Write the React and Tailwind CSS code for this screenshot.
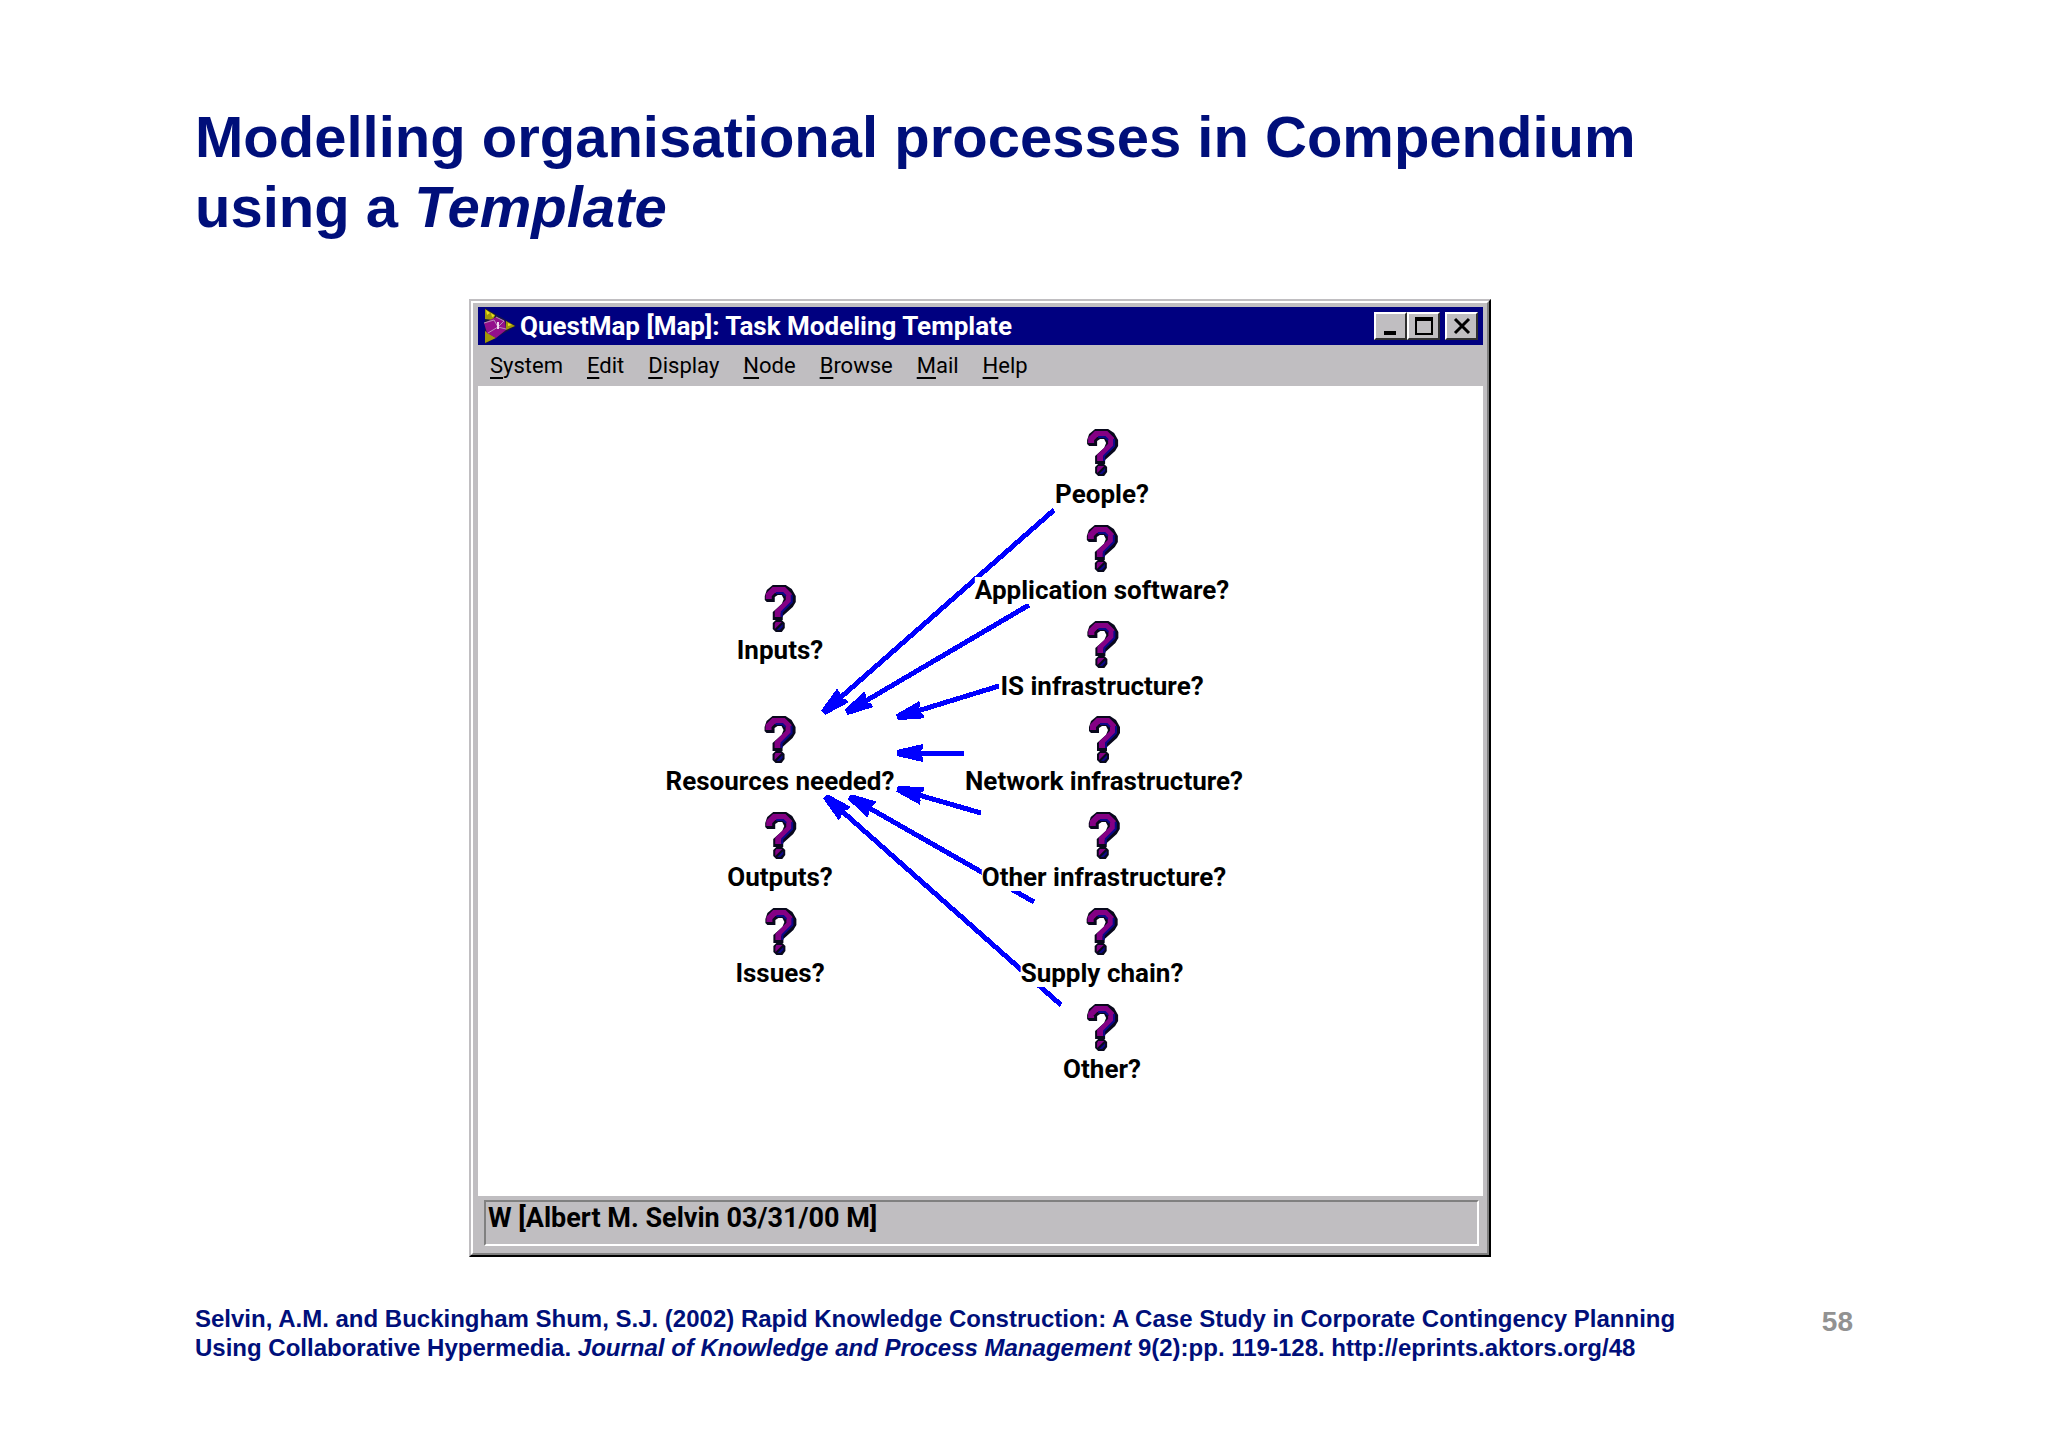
const MENUS = ['System', 'Edit', 'Display', 'Node', 'Browse', 'Mail', 'Help']

// x is the centre of a node, y the top of its icon, both in canvas pixels
const NODES = [
  { label: 'Inputs?', x: 302, y: 198 },
  { label: 'Resources needed?', x: 302, y: 329 },
  { label: 'Outputs?', x: 302, y: 425 },
  { label: 'Issues?', x: 302, y: 521 },
  { label: 'People?', x: 624, y: 42 },
  { label: 'Application software?', x: 624, y: 138 },
  { label: 'IS infrastructure?', x: 624, y: 234 },
  { label: 'Network infrastructure?', x: 626, y: 329 },
  { label: 'Other infrastructure?', x: 626, y: 425 },
  { label: 'Supply chain?', x: 624, y: 521 },
  { label: 'Other?', x: 624, y: 617 },
]

const LINKS = [
  { from: [576, 124], to: [346, 326] },
  { from: [551, 219], to: [369, 326] },
  { from: [521, 300], to: [420, 331] },
  { from: [486, 367], to: [420, 367] },
  { from: [503, 427], to: [420, 403] },
  { from: [556, 516], to: [372, 411] },
  { from: [583, 619], to: [348, 411] },
]

function QuestionIcon() {
  return (
    <svg width="34" height="48" viewBox="0 0 34 48" aria-hidden="true">
      <g fill="#08081c">
        <path d="M2 12L4 6L10 1H23L29 5L33 12V18L30 23L20 32V36H10V28L19 20L21 15L19 11H15L12 13V18H4L2 16Z" />
        <path d="M13 36H19L22 39V44L19 48H13L10 45V39Z" />
      </g>
      <path d="M6 15V11L11 6H21L26 11V17L15 28V33" fill="none" stroke="#840084" strokeWidth="6" />
      <path d="M13 9H20L23 12M29 11V18L19 28V33" fill="none" stroke="#0c0888" strokeWidth="2" />
      <path d="M13 38H19L12 45V40Z" fill="#840084" />
      <path d="M20 40V43L17 46H14Z" fill="#0c0888" />
    </svg>
  )
}

function Link({ from, to }) {
  const angle = (Math.atan2(from[1] - to[1], from[0] - to[0]) * 180) / Math.PI
  return (
    <g>
      <line x1={from[0]} y1={from[1]} x2={to[0]} y2={to[1]} stroke="#0000ff" strokeWidth="5" />
      <path d="M-1 -3L25 -9V-5L21 0L25 5V9L-1 3Z" fill="#0000ff" transform={`translate(${to[0]} ${to[1]}) rotate(${angle})`} />
    </g>
  )
}

function MapNode({ label, x, y }) {
  return (
    <div className="absolute flex -translate-x-1/2 flex-col items-center gap-[5px]" style={{ left: x, top: y }}>
      <QuestionIcon />
      <span className="bg-white text-[26px] leading-[27px] font-bold whitespace-nowrap">{label}</span>
    </div>
  )
}

function CaptionButton({ label, children }) {
  return (
    <button
      aria-label={label}
      className="flex h-7 w-[33px] items-center justify-center border-2 border-t-white border-r-[#303030] border-b-[#303030] border-l-white bg-[#c0bec1]"
    >
      {children}
    </button>
  )
}

function TitleBar() {
  return (
    <div className="flex h-[38px] items-center bg-[#000080] pr-[5px] pl-1">
      <svg width="34" height="36" viewBox="0 0 34 36" aria-hidden="true">
        <path d="M3 0L34 18L3 36Z" fill="#181840" />
        <path d="M3 1L13 7L11 12L3 11ZM24 13L33 18L24 22ZM3 23L14 30L3 35Z" fill="#a09808" />
        <path d="M4 2L8 5L5 7ZM9 5L13 8L10 9ZM26 15L30 17L26 18Z" fill="#e8e020" />
        <path d="M2 15L14 9L23 13L24 22L14 30L5 25Z" fill="#94108c" />
        <path d="M2 15L12 12L16 19L24 21M16 19L6 25M14 9L22 13L16 19" fill="none" stroke="#b890b8" strokeWidth="1" />
        <path d="M15 14H17V21H15Z" fill="#f0d8f0" />
      </svg>
      <h2 className="ml-1 flex-1 text-[26px] leading-[30px] font-bold whitespace-nowrap text-white">
        QuestMap [Map]: Task Modeling Template
      </h2>
      <div className="flex">
        <CaptionButton label="Minimize">
          <svg width="20" height="20" viewBox="0 0 20 20">
            <path d="M3 17H15" stroke="#000" strokeWidth="4" />
          </svg>
        </CaptionButton>
        <CaptionButton label="Maximize">
          <svg width="20" height="20" viewBox="0 0 20 20">
            <path d="M2 2H18V18H2Z" fill="none" stroke="#000" strokeWidth="2" />
            <path d="M1 3H19" stroke="#000" strokeWidth="4" />
          </svg>
        </CaptionButton>
      </div>
      <div className="ml-[5px]">
        <CaptionButton label="Close">
          <svg width="20" height="20" viewBox="0 0 20 20">
            <path d="M3 3L17 17M17 3L3 17" stroke="#000" strokeWidth="3" />
          </svg>
        </CaptionButton>
      </div>
    </div>
  )
}

function MenuBar() {
  return (
    <nav className="flex h-[41px] items-center gap-6 pl-3">
      {MENUS.map((name) => (
        <button key={name} className="text-[22px] leading-[30px] font-normal">
          <span className="underline decoration-2 underline-offset-4">{name[0]}</span>
          {name.slice(1)}
        </button>
      ))}
    </nav>
  )
}

function MapWindow() {
  return (
    <section className="w-full max-w-[1022px] border-2 border-t-[#c0bec1] border-r-black border-b-black border-l-[#c0bec1] bg-[#c0bec1] font-['Roboto',sans-serif] text-black">
      <div className="border-2 border-t-white border-r-[#808080] border-b-[#808080] border-l-white pt-1 pr-1 pb-[7px] pl-[5px]">
        <TitleBar />
        <MenuBar />
        <div className="relative h-[810px] overflow-hidden bg-white">
          <svg className="absolute inset-0 h-full w-full" shapeRendering="crispEdges" aria-hidden="true">
            {LINKS.map((link, i) => (
              <Link key={i} {...link} />
            ))}
          </svg>
          {NODES.map((node) => (
            <MapNode key={node.label} {...node} />
          ))}
        </div>
        <div className="mt-1 mr-1 ml-[6px] h-[46px] border-2 border-t-[#808080] border-r-white border-b-white border-l-[#808080] pl-[2px] text-[27px] leading-[32px] font-bold">
          W [Albert M. Selvin 03/31/00 M]
        </div>
      </div>
    </section>
  )
}

export default function App() {
  return (
    <main className="min-h-screen bg-white px-[195px] pt-[102px] pb-[83px] font-['Liberation_Sans',Arial,sans-serif] font-bold text-[#000f7a]">
      <h1 className="text-[58px] leading-[70px]">
        Modelling organisational processes in Compendium
        <br />
        using a <em>Template</em>
      </h1>
      <div className="mt-[57px] pl-[274px]">
        <MapWindow />
      </div>
      <footer className="mt-[47px] flex items-start justify-between">
        <p className="text-[24px] leading-[29px]">
          Selvin, A.M. and Buckingham Shum, S.J. (2002) Rapid Knowledge Construction: A Case Study in Corporate Contingency Planning
          <br />
          Using Collaborative Hypermedia. <em>Journal of Knowledge and Process Management</em> 9(2):pp. 119-128.{' '}
          <a href="http://eprints.aktors.org/48">http://eprints.aktors.org/48</a>
        </p>
        <span className="text-[28px] leading-[36px] text-[#929292]">58</span>
      </footer>
    </main>
  )
}
